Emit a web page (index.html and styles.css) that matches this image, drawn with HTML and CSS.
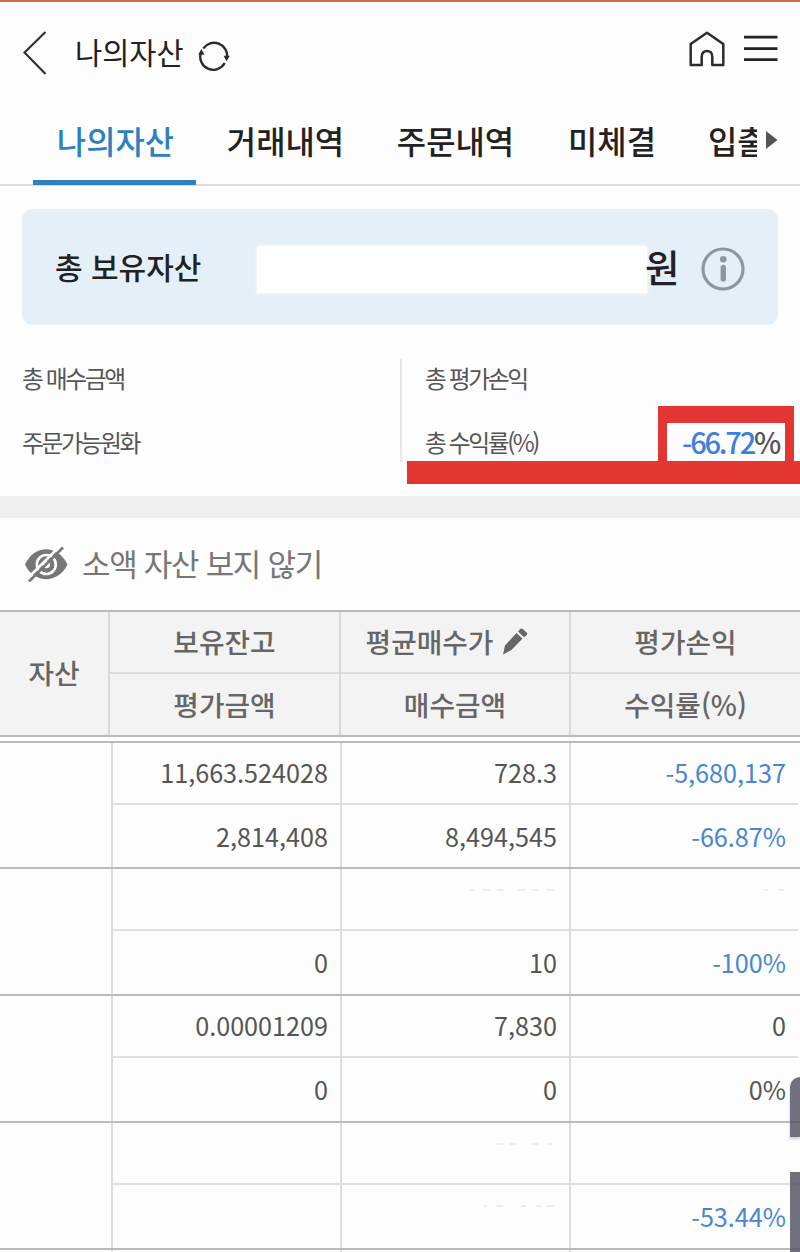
FILE: index.html
```html
<!DOCTYPE html>
<html lang="ko">
<head>
<meta charset="utf-8">
<title>나의자산</title>
<link rel="stylesheet" href="styles.css">
</head>
<body>
<div class="app">
  <header class="topbar">
    <svg class="back" width="24" height="44" viewBox="0 0 24 44"><path d="M22.500 1 1.500 21.500 22.500 43" fill="none" stroke="#333" stroke-width="2.200"/></svg>
    <h1 class="title">나의자산</h1>
    <svg class="refresh" width="32" height="30" viewBox="0 0 32 30" fill="none" stroke="#2c2c2c" stroke-width="2.400"><path d="M5.300 7.500A13 13 0 0 1 29 16.500M26.700 22A13 13 0 0 1 3 11.500"/><path d="M25.500 14.700h6.200l-3 5.600zM.3 13.700h6.200L3.300 8z" fill="#2c2c2c" stroke="none"/></svg>
    <svg class="home" width="36" height="36" viewBox="0 0 36 36" fill="none" stroke="#2c2c2c" stroke-width="2.500" stroke-linejoin="round"><path d="M1.700 13 18 1.700 34.300 13V34H23.300V25.500C23.300 18 12.700 18 12.700 25.500V34H1.700z"/></svg>
    <svg class="menu" width="34" height="28" viewBox="0 0 34 28" stroke="#222" stroke-width="2.800"><path d="M0 2.200h33.500M0 13.700h33.500M0 24.700h33.500"/></svg>
  </header>
  <nav class="tabs">
    <a class="tab active">나의자산</a>
    <a class="tab">거래내역</a>
    <a class="tab">주문내역</a>
    <a class="tab">미체결</a>
    <a class="tab cut">입출</a>
    <svg class="more" width="12" height="18" viewBox="0 0 12 18"><path d="M0 0 11.500 9 0 18z" fill="#555"/></svg>
  </nav>
  <section class="total">
    <span class="total-label">총 보유자산</span>
    <span class="mask"></span>
    <span class="won">원</span>
    <svg class="info" width="44" height="44" viewBox="0 0 44 44"><circle cx="22" cy="22" r="20" fill="none" stroke="#8f969e" stroke-width="3.200"/><circle cx="22.300" cy="12.300" r="3.300" fill="#8f969e"/><path d="M22.300 20.500V32" stroke="#8f969e" stroke-width="5.400" stroke-linecap="round"/></svg>
  </section>
  <section class="summary">
    <div class="sum-col"><span>총 매수금액</span><span>주문가능원화</span></div>
    <div class="sum-col right"><span>총 평가손익</span><span>총 수익률(%)</span></div>
    <div class="underline"></div>
    <div class="rate-box"><span class="rate"><b lang="ja">-66.72</b>%</span></div>
  </section>
  <div class="band"></div>
  <div class="filter">
    <svg class="eye" width="43" height="36" viewBox="0 0 43 36"><path d="M0 18.500C9-2 33-2 42.500 18.500C33 38 9 38 0 18.500z" fill="#777"/><circle cx="21.300" cy="18.500" r="9.500" fill="none" stroke="#fff" stroke-width="2.600"/><circle cx="21.300" cy="18.500" r="3.800" fill="#fff"/><path d="M2.500 32.500 36-1" stroke="#fff" stroke-width="2.600"/><path d="M4 35.500 38 1.500" stroke="#777" stroke-width="2.600"/></svg>
    <span class="filter-text">소액 자산 보지 않기</span>
  </div>
  <div class="thead">
    <div class="th asset">자산</div>
    <div class="pair"><div class="th">보유잔고</div><div class="th">평가금액</div></div>
    <div class="pair"><div class="th edit">평균매수가<svg class="pencil" width="25" height="27" viewBox="0 0 25 27" fill="#666"><path d="M0 26.500 2 17.500 13.500 5 19.500 10.500 8.500 22zM15 3.500 17 1.200Q18.500-.3 20 1.200L23.500 4.500Q25 6 23.500 7.300L21 9.300z"/></svg></div><div class="th">매수금액</div></div>
    <div class="pair"><div class="th">평가손익</div><div class="th">수익률(%)</div></div>
  </div>
  <div class="tbody">
    <div class="row">
      <div class="name"></div>
      <div class="pair"><div>11,663.524028</div><div>2,814,408</div></div>
      <div class="pair"><div>728.3</div><div>8,494,545</div></div>
      <div class="pair loss" lang="ja"><div>-5,680,137</div><div>-66.87%</div></div>
    </div>
    <div class="row tall">
      <div class="name"></div>
      <div class="pair"><div></div><div>0</div></div>
      <div class="pair"><div><svg class="trace" width="88" height="4" viewBox="0 0 88 4"><path d="M1 2h4M14 2h7M28 2h7M49 2h7M63 2h7M78 2h7"/></svg></div><div>10</div></div>
      <div class="pair loss" lang="ja"><div><svg class="trace" width="24" height="4" viewBox="0 0 24 4"><path d="M2 2h4M16 2h6"/></svg></div><div>-100%</div></div>
    </div>
    <div class="row tall">
      <div class="name"></div>
      <div class="pair"><div>0.00001209</div><div>0</div></div>
      <div class="pair"><div>7,830</div><div>0</div></div>
      <div class="pair"><div>0</div><div>0%</div></div>
    </div>
    <div class="row tall">
      <div class="name"></div>
      <div class="pair"><div></div><div></div></div>
      <div class="pair"><div><svg class="trace" width="62" height="4" viewBox="0 0 62 4"><path d="M1 2h7M15 2h7M38 2h5M53 2h5"/></svg></div><div><svg class="trace" width="74" height="4" viewBox="0 0 74 4"><path d="M1 2h3M13 2h7M38 2h5M53 2h5M63 2h9"/></svg></div></div>
      <div class="pair loss" lang="ja"><div></div><div>-53.44%</div></div>
    </div>
    <div class="row">
      <div class="name"></div><div class="pair"></div><div class="pair"></div><div class="pair"></div>
    </div>
  </div>
  <div class="handle upper"></div>
  <div class="handle lower"></div>
</div>
</body>
</html>
```
FILE: styles.css
```css
* { box-sizing: border-box; }
body {
  margin: 0;
  background: #fdfdfd;
  font-family: "Noto Sans CJK KR", "Noto Sans", sans-serif;
  color: #555;
}
.app {
  position: relative;
  width: 800px;
  height: 1252px;
  overflow: hidden;
  border-top: 2px solid #c2714f;
}
.topbar {
  display: flex;
  align-items: flex-start;
  height: 98px;
  padding: 0 22px 0 23px;
}
.back { margin-top: 29px; }
.title {
  margin: 27px 0 0 28px;
  font-size: 29.500px;
  font-weight: 400;
  line-height: 44px;
  color: #222;
  width: 109px;
  white-space: nowrap;
}
.refresh { margin: 39px 0 0 14px; }
.home { margin: 29px 19px 0 auto; }
.menu { margin-top: 33px; }
.tabs {
  display: flex;
  height: 86px;
  padding-left: 33px;
  border-bottom: 2px solid #ddd;
}
.tab {
  width: 163px;
  height: 85px;
  margin-right: 7px;
  padding-left: 2px;
  text-align: center;
  font-size: 31.900px;
  font-weight: 500;
  line-height: 81px;
  color: #222;
  white-space: nowrap;
  flex: none;
}
.tab:nth-child(3) { margin-right: 0; }
.tab:nth-child(4) { width: 150px; margin-right: 0; }
.active { color: #2d82bd; border-bottom: 5px solid #2d82bd; }
.cut { width: 50px; margin: 0 9px 0 21px; padding-left: 1px; overflow: hidden; text-align: left; }
.more { margin-top: 31px; }
.total {
  display: flex;
  align-items: center;
  height: 116px;
  margin: 23px 22px 0;
  padding: 0 33px;
  border-radius: 11px;
  background: #e4eff8;
  color: #222;
}
.total-label { width: 202px; margin-top: -3px; font-size: 30px; font-weight: 500; line-height: 44px; white-space: nowrap; }
.mask { width: 390px; height: 47px; margin-top: 4px; background: #fff; box-shadow: 0 0 4px #fff; }
.won { width: 34px; margin: -3px 0 0 -2px; font-size: 37.500px; font-weight: 500; line-height: 50px; }
.info { margin: 4px 0 0 22px; }
.summary {
  position: relative;
  display: flex;
  height: 171px;
  padding: 33px 22px 0;
}
.sum-col {
  display: grid;
  grid-template-rows: 40px 64px;
  height: 104px;
  width: 379px;
  font-size: 23.800px;
  line-height: 39px;
  letter-spacing: -2.400px;
}
.sum-col span:last-child { padding-top: 24px; }
.right { border-left: 2px solid #e8e8e8; padding-left: 23px; }
.underline { position: absolute; left: 407px; right: 0; top: 136px; height: 23px; background: #e33632; }
.rate-box {
  position: absolute;
  left: 658px;
  top: 81px;
  width: 136px;
  height: 56px;
  border: solid #e33632;
  border-width: 17px 9px 0;
  padding-right: 6px;
  text-align: right;
}
.rate { font-size: 29px; font-weight: 500; line-height: 36px; letter-spacing: -2.200px; white-space: nowrap; }
.rate b { font-family: "Noto Sans CJK JP", sans-serif; font-weight: 500; color: #3c80e0; }
.band { height: 22px; background: #efefef; }
.filter {
  display: flex;
  align-items: center;
  gap: 14px;
  height: 92px;
  padding-left: 25px;
  font-size: 31px;
  letter-spacing: -1.300px;
  color: #777;
}
.filter-text { padding-bottom: 4px; }
.thead {
  display: grid;
  grid-template-columns: 108px 231px 230px 231px;
  height: 127px;
  border-top: 2px solid #bbb;
  border-bottom: 2px solid #bbb;
  background: #f3f3f3;
  font-size: 27.800px;
  font-weight: 500;
  color: #666;
}
.thead .pair { border-left: 2px solid #d9d9d9; }
.th { display: flex; align-items: center; justify-content: center; height: 60px; padding-bottom: 2px; }
.asset { height: 121px; }
.thead .th + .th { height: 63px; border-top: 2px solid #dcdcdc; }
.edit { padding-right: 16px; }
.pencil { margin-left: 10px; }
.tbody { margin-top: 4px; }
.row {
  display: grid;
  grid-template-columns: 111px 229px 229px 229px;
  height: 126px;
  border-top: 2px solid #bbb;
  font-size: 25.200px;
}
.tall { height: 127px; }
.row .pair {
  display: grid;
  grid-template-rows: 60px 1fr;
  border-left: 2px solid #ddd;
  text-align: right;
  line-height: 58px;
}
.row .pair div { padding-right: 12px; }
.row .pair div + div { border-top: 2px solid #dfdfdf; line-height: 62px; }
.row .loss { font-family: "Noto Sans CJK JP", sans-serif; color: #4a86d0; }
.trace { display: block; margin: 19px 0 0 auto; stroke: #ddd; stroke-width: 1.200; fill: none; }
.handle { position: absolute; right: 0; width: 10px; background: rgba(82, 80, 99, .82); }
.upper { top: 1075px; height: 60px; border-radius: 10px 0 0; box-shadow: 0 2px 3px #ccc; }
.lower { top: 1170px; height: 82px; }
```
